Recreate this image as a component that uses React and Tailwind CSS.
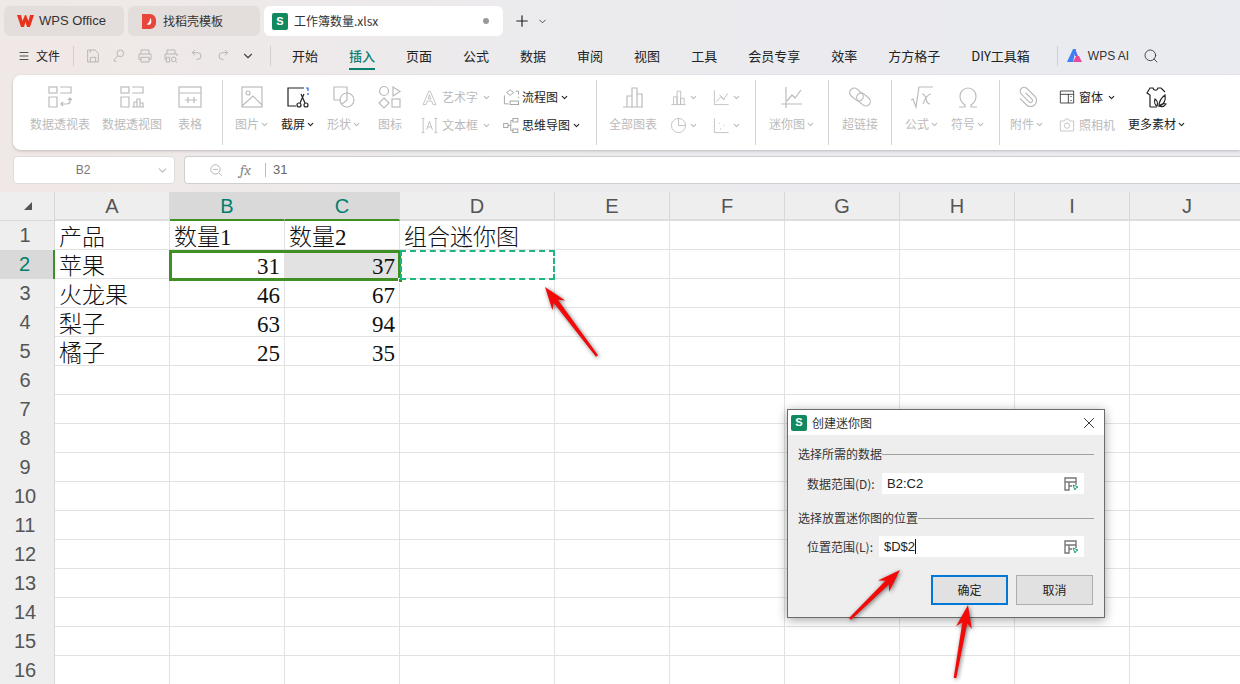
import React from 'react';
import { ChevronDown, Plus, Search, X, Menu } from 'lucide-react';

const cjk = '"Noto Sans CJK SC", "Noto Sans", sans-serif';
const cols = ['A', 'B', 'C', 'D', 'E', 'F', 'G', 'H', 'I', 'J'];
const rows = Array.from({ length: 16 }, (_, i) => i + 1);
const cells = {
  A1: '产品', B1: '数量1', C1: '数量2', D1: '组合迷你图',
  A2: '苹果', B2: '31', C2: '37',
  A3: '火龙果', B3: '46', C3: '67',
  A4: '梨子', B4: '63', C4: '94',
  A5: '橘子', B5: '25', C5: '35',
};
const menus = ['开始', '插入', '页面', '公式', '数据', '审阅', '视图', '工具', '会员专享', '效率', '方方格子', 'DIY工具箱'];

function Svg({ size = 24, children, className = '' }) {
  return (
    <svg width={size} height={size} viewBox="0 0 24 24" fill="none" stroke="currentColor" strokeWidth="1.2" className={className}>
      {children}
    </svg>
  );
}

const icons = {
  pivot: <><rect x="1" y="2" width="8" height="6" /><path d="M12 2h11v6H12M1 12h8v10H1z" /><path d="M13 19h6a3 3 0 0 0 3-3v-3M20 15l2-2 2 2M15 17l-2 2 2 2" /></>,
  pivotChart: <><rect x="1" y="2" width="8" height="6" /><path d="M12 2h11v6H12M1 12h8v10H1z" /><path d="M12 22h12M14 22v-5h3v5M17 22v-8h3v8M20 22v-4h3v4" /></>,
  table: <><rect x="1" y="2" width="22" height="20" /><path d="M1 8h22M7 15h12M10 12v6M16 12v6" /></>,
  picture: <><rect x="2" y="2" width="20" height="20" /><circle cx="8" cy="8" r="2" /><path d="M2 21l11-10 9 9" /></>,
  shot: <><path d="M18 3H2v18h8" stroke="#222" /><path d="M20 3h2v3M22 8v2" stroke="#2563eb" /><path d="M11 21h1" stroke="#2563eb" /><circle cx="13" cy="20" r="2" stroke="#222" /><circle cx="20" cy="20" r="2" stroke="#222" /><path d="M14 18l4-9M19 18l-4-9" stroke="#222" /></>,
  shape: <><path d="M9 15H2V2h13v6" /><circle cx="15" cy="15" r="7" /><path d="M15 8v7l-5 4" /></>,
  iconset: <><circle cx="6" cy="6" r="4.500" /><path d="M15 2l7 4.500-7 4.500zM6 13l5 5-5 5-5-5z" /><rect x="14" y="14" width="8" height="8" /></>,
  chart: <><path d="M2 22h20M6 22V11h5v11M11 22V3h5v19M16 22V9h5v13" /></>,
  spark: <><path d="M6 2v21M1 19h21M7 16l5-6 3 3 6-8" /></>,
  link: <><rect x="1" y="5" width="15" height="9" rx="4.500" transform="rotate(40 8.500 9.500)" /><rect x="8" y="10" width="15" height="9" rx="4.500" transform="rotate(40 15.500 14.500)" /></>,
  formula: <><path d="M1 15l2-1 3 8 3-20h14" /><path d="M12 9c2 0 3 1 4 5s2 5 4 5M21 9c-3 0-6 5-8 10" /></>,
  omega: <><path d="M3 22h6v-2c-3-2-5-5-5-9a8 8 0 0 1 16 0c0 4-2 7-5 9v2h6" /></>,
  clip: <path d="M14 8v9a2 2 0 0 1-4 0V6a4 4 0 0 1 8 0v11a6 6 0 0 1-12 0V8" transform="rotate(-45 12 12)" />,
  more: <g stroke="#222"><path d="M5 22V10L2 8l3-5h3c1 3 4 3 5 0h3l4 4M5 22h7" /><path d="M14 21c0-5 2-8 6-11 1 5-1 10-6 11zM12 21c-2-1-3-4-2-7 2 1 3 4 2 7zM14 21c2 1 5 1 7-2-3-1-5 0-7 2z" /></g>,
};

function BigItem({ icon, label, w, arrow, dark }) {
  return (
    <div className={`flex flex-col items-center shrink-0 ${w} ${dark ? 'text-[#222]' : 'text-[#bbbbbb]'}`}>
      <Svg>{icons[icon]}</Svg>
      <div className="mt-[7px] flex items-center text-xs leading-4 whitespace-nowrap">
        {label}
        {arrow && <ChevronDown size={9} strokeWidth={3} className="ml-px" />}
      </div>
    </div>
  );
}

function SmallRow({ children, label, dark, arrow = true, gap = 'gap-1' }) {
  return (
    <div className={`flex items-center h-4 ${gap} text-xs whitespace-nowrap ${dark ? 'text-[#222]' : 'text-[#bbbbbb]'}`}>
      {children}
      {label}
      {arrow && <ChevronDown size={9} strokeWidth={3} />}
    </div>
  );
}

function Divider() {
  return <div className="w-px bg-[#d4d4d4] my-1 shrink-0" />;
}

function Ribbon() {
  return (
    <div className="ml-[13px] h-[75px] flex rounded-l-lg bg-white shadow-[0_1px_3px_rgba(0,0,0,0.2)] py-[1px]">
      <div className="flex w-[209px] pl-[11px] pt-[9px] shrink-0">
        <BigItem icon="pivot" label="数据透视表" w="w-[72px]" />
        <BigItem icon="pivotChart" label="数据透视图" w="w-[72px]" />
        <BigItem icon="table" label="表格" w="w-[44px]" />
      </div>
      <Divider />
      <div className="flex w-[373px] pl-[6px] pt-[9px] shrink-0">
        <BigItem icon="picture" label="图片" w="w-[46px]" arrow />
        <BigItem icon="shot" label="截屏" w="w-[46px]" arrow dark />
        <BigItem icon="shape" label="形状" w="w-[46px]" arrow />
        <BigItem icon="iconset" label="图标" w="w-[46px]" />
        <div className="ml-[8px] w-[80px] flex flex-col gap-[12px] pt-[4px]">
          <SmallRow label="艺术字"><Svg size={17}><path d="M3 22L11 3h2l8 19h-4l-2-5H9l-2 5zM10 14h4l-2-6z" /></Svg></SmallRow>
          <SmallRow label="文本框"><Svg size={17}><path d="M1 2h4M3 2v20M1 22h4M19 2h4M21 2v20M19 22h4M8 18l4-12 4 12M9 14h6" /></Svg></SmallRow>
        </div>
        <div className="ml-[2px] flex flex-col gap-[12px] pt-[4px]">
          <SmallRow label="流程图" dark gap="gap-[2px]"><Svg size={17} className="text-[#999]"><path d="M10 1l5 4-5 4-5-4zM18 3h4v5M22 11v2M2 9v12h6" /><rect x="10" y="17" width="12" height="5" /></Svg></SmallRow>
          <SmallRow label="思维导图" dark gap="gap-[2px]"><Svg size={17} className="text-[#999]"><rect x="1" y="9" width="6" height="6" /><rect x="14" y="2" width="7" height="5" /><rect x="14" y="17" width="7" height="5" /><path d="M7 12h4V5h3M11 12v7h3" /></Svg></SmallRow>
        </div>
      </div>
      <Divider />
      <div className="flex w-[158px] pl-[10px] pt-[9px] shrink-0">
        <BigItem icon="chart" label="全部图表" w="w-[52px]" />
        <div className="ml-[11px] w-[43px] flex flex-col gap-[12px] pt-[4px]">
          <SmallRow arrow gap="gap-[2px]"><Svg size={17}><path d="M2 22h20M5 22V11h5v11M10 22V3h5v19M15 22v-9h5v9" /></Svg></SmallRow>
          <SmallRow arrow gap="gap-[2px]"><Svg size={17}><circle cx="12" cy="12" r="10" /><path d="M12 2v10h10" /></Svg></SmallRow>
        </div>
        <div className="flex flex-col gap-[12px] pt-[4px]">
          <SmallRow arrow gap="gap-[2px]"><Svg size={17}><path d="M2 2v20h20M5 18l6-7 4 4 6-9M9 8l7 7" /></Svg></SmallRow>
          <SmallRow arrow gap="gap-[2px]"><Svg size={17}><path d="M2 2v20h20" /><path d="M9 9h1M15 12h1M10 17h1" strokeWidth="2" /></Svg></SmallRow>
        </div>
      </div>
      <Divider />
      <div className="flex w-[72px] pt-[9px] shrink-0">
        <BigItem icon="spark" label="迷你图" w="w-[72px]" arrow />
      </div>
      <Divider />
      <div className="flex w-[62px] pt-[9px] shrink-0">
        <BigItem icon="link" label="超链接" w="w-[62px]" />
      </div>
      <Divider />
      <div className="flex w-[107px] pl-[7px] pt-[9px] shrink-0">
        <BigItem icon="formula" label="公式" w="w-[46px]" arrow />
        <BigItem icon="omega" label="符号" w="w-[46px]" arrow />
      </div>
      <Divider />
      <div className="flex pl-[4px] pt-[9px]">
        <BigItem icon="clip" label="附件" w="w-[46px]" arrow />
        <div className="ml-[9px] w-[64px] flex flex-col gap-[12px] pt-[4px]">
          <SmallRow label="窗体" dark gap="gap-[4px]"><Svg size={16}><path d="M2 3h20v18H2zM2 8h20M14 8v13" /><path d="M17 12l1-1 1 1M17 17l1 1 1-1" /></Svg></SmallRow>
          <SmallRow label="照相机" arrow={false} gap="gap-[4px]"><Svg size={16}><path d="M2 6h6l2-3h4l2 3h6v15H2z" /><circle cx="12" cy="13" r="4" /></Svg></SmallRow>
        </div>
        <BigItem icon="more" label="更多素材" w="w-[68px]" arrow dark />
      </div>
    </div>
  );
}

function Chrome() {
  return (
    <div className="h-[192px] bg-gradient-to-r from-[#f0e8e6] via-[#ebebee] to-[#eaebf0]" style={{ fontFamily: cjk }}>
      {/* tabs */}
      <div className="h-[38px] flex items-start pt-[6px] pl-[4px] gap-[4px] text-[12px] text-[#333]">
        <div className="w-[120px] h-[30px] rounded-md bg-[#e3dddb] flex items-center pl-[13px] gap-[5px]">
          <svg width="17" height="14" viewBox="0 0 17 14"><path d="M0 1h4l1.500 6L8 1h1l2.500 6L13 1h4l-4 12h-3L8.500 8 7 13H4z" fill="#e8341c" /></svg>
          <span className="text-[13px]" style={{ fontFamily: '"Liberation Sans", sans-serif' }}>WPS Office</span>
        </div>
        <div className="w-[132px] h-[30px] rounded-md bg-[#e3dddb] flex items-center pl-[13px] gap-[6px]">
          <svg width="16" height="17" viewBox="0 0 16 17"><path d="M1 1h8a6 6 0 0 1 6 6v3a6 6 0 0 1-6 6H1z" fill="#e8463c" /><path d="M5 11c2 0 4-2 4-6 2 2 2 6-1 7" fill="white" /></svg>
          <span>找稻壳模板</span>
        </div>
        <div className="w-[239px] h-[30px] rounded-md bg-white flex items-center pl-[8px] gap-[6px]">
          <div className="w-[16px] h-[17px] rounded-[2px] bg-[#10895f] text-white text-[11px] font-bold flex items-center justify-center" style={{ fontFamily: '"Liberation Sans", sans-serif' }}>S</div>
          <span>工作簿数量.xlsx</span>
          <div className="ml-auto mr-[14px] w-[6px] h-[6px] rounded-full bg-[#999]" />
        </div>
        <Plus size={18} strokeWidth={1.6} className="ml-[6px] mt-[6px] text-[#222]" />
        <ChevronDown size={11} strokeWidth={2} className="ml-[2px] mt-[10px] text-[#444]" />
      </div>
      {/* menu */}
      <div className="h-[37px] flex items-center pb-[2px] pl-[18px] text-[13px] text-[#222]">
        <Menu size={12} strokeWidth={1.5} />
        <span className="ml-[6px] text-xs">文件</span>
        <div className="ml-[13px] w-px h-[20px] bg-[#cfcfcf]" />
        <div className="ml-[11px] w-[185px] flex items-center gap-[10px] text-[#aaaaaa]">
          <Svg size={16}><path d="M4 3h11l5 5v13H4zM8 21v-7h8v7M8 3v4" /></Svg>
          <Svg size={16}><circle cx="14" cy="8" r="5" /><path d="M10 12l-5 5v3h3" /></Svg>
          <Svg size={16}><path d="M6 9V3h12v6M6 17H3V9h18v8h-3M6 14h12v7H6z" /></Svg>
          <Svg size={16}><path d="M6 9V3h12v6M5 17H3V9h18v3M5 14h5v7H5z" /><circle cx="16" cy="17" r="3.500" /><path d="M19 20l2 2" /></Svg>
          <Svg size={16}><path d="M9 3L5 7l4 4M5 7h8a5 5 0 0 1 0 10h-2" /></Svg>
          <Svg size={16}><path d="M15 3l4 4-4 4M19 7h-8a5 5 0 0 0 0 10h2" /></Svg>
          <ChevronDown size={14} className="text-[#444]" />
        </div>
        <div className="w-px h-[20px] bg-[#cfcfcf]" />
        <div className="ml-[21px] flex items-center gap-[31px]">
          {menus.map(m => (
            <div key={m} className={`relative whitespace-nowrap ${m === '插入' ? 'text-[#0b7f6e] font-medium' : ''}`}>
              {m}
              {m === '插入' && <div className="absolute left-0 right-0 -bottom-[5px] h-[2px] bg-[#0b7f6e]" />}
            </div>
          ))}
        </div>
        <div className="ml-[27px] w-px h-[20px] bg-[#cfcfcf]" />
        <svg className="ml-[9px]" width="16" height="13" viewBox="0 0 16 13">
          <path d="M0 13L6 0h3L6 13z" fill="#3b82f6" /><path d="M6 13l3-6 3 0 3 6z" fill="#ec4899" /><path d="M8 0l3 7H8z" fill="#6d5ef0" />
        </svg>
        <span className="ml-[5px] text-xs text-[#333]" style={{ fontFamily: '"Liberation Sans", sans-serif' }}>WPS AI</span>
        <Search size={16} strokeWidth={1.3} className="ml-[14px] text-[#333]" />
      </div>
      <Ribbon />
      {/* formula bar */}
      <div className="mt-[6px] h-[28px] flex pl-[13px] gap-[9px] text-[#777]">
        <div className="w-[162px] rounded-[4px] bg-white border border-[#dddddd] flex items-center text-xs relative">
          <span className="w-full text-center pr-[22px]" style={{ fontFamily: '"Liberation Sans", sans-serif' }}>B2</span>
          <ChevronDown size={13} className="absolute right-[5px] text-[#bbbbbb]" />
        </div>
        <div className="flex-1 rounded-l-[4px] bg-white border border-r-0 border-[#cfcfcf] flex items-center pl-[24px] text-[13px]" style={{ fontFamily: '"Liberation Sans", sans-serif' }}>
          <Svg size={14} className="text-[#999]"><circle cx="11" cy="11" r="8" /><path d="M17 17l5 5M7 11h8" /></Svg>
          <span className="ml-[17px] italic text-[15px] font-serif text-[#888]">fx</span>
          <div className="ml-[14px] w-px h-[14px] bg-[#bbbbbb]" />
          <span className="ml-[7px] text-[#666]">31</span>
        </div>
      </div>
    </div>
  );
}

function Sheet() {
  return (
    <div className="relative grid bg-white grid-cols-[55px_115px_115px_115px_155px_115px_115px_115px_115px_115px_115px] grid-rows-[29px_repeat(16,29px)]">
      <div className="bg-[#eeeeee] border-r border-b border-[#d8d8d8] flex items-center justify-center pl-[2px]">
        <svg width="10" height="10" viewBox="0 0 10 10"><path d="M9 1v8H1z" fill="#555" /></svg>
      </div>
      {cols.map(c => {
        const on = c === 'B' || c === 'C';
        return (
          <div
            key={c}
            className={`flex items-center justify-center text-[20px] border-r border-b-2 ${on ? 'bg-[#d9d9d9] text-[#00806c] border-r-[#d9d9d9] border-b-[#3f8f24]' : 'bg-[#eeeeee] text-[#555] border-r-[#d8d8d8] border-b-[#dddddd]'}`}
            style={{ fontFamily: '"Liberation Sans", sans-serif' }}
          >
            {c}
          </div>
        );
      })}
      {rows.map(r => (
        <React.Fragment key={r}>
          <div
            className={`flex items-center justify-center pr-[4px] pb-[2px] text-[20px] ${r === 2 ? 'bg-[#d9d9d9] text-[#00806c] border-r-2 border-r-[#3f8f24]' : 'bg-[#eeeeee] text-[#555] border-r border-r-[#d8d8d8]'}`}
            style={{ fontFamily: '"Liberation Sans", sans-serif' }}
          >
            {r}
          </div>
          {cols.map(c => {
            const id = c + r;
            const v = cells[id];
            const num = v && /^\d+$/.test(v);
            return (
              <div
                key={id}
                className={`border-r border-b border-[#e2e2e2] flex items-end leading-[22px] text-[23px] font-light text-[#111] px-[4px] whitespace-nowrap overflow-visible ${num ? 'justify-end' : ''} ${id === 'C2' ? 'bg-[#e2e2e2]' : ''}`}
                style={{ fontFamily: '"Liberation Serif", "Noto Sans CJK SC", serif' }}
              >
                {v}
              </div>
            );
          })}
        </React.Fragment>
      ))}
      {/* selection */}
      <div className="absolute left-[169px] top-[58px] w-[232px] h-[31px] border-[3px] border-[#3f8f24] pointer-events-none" />
      <div className="absolute left-[398px] top-[86px] w-[5px] h-[5px] bg-[#3f8f24] border border-white" />
      <div className="absolute left-[400px] top-[58px] w-[155px] h-[30px] border-2 border-dashed border-[#1fb57f] pointer-events-none" />
    </div>
  );
}

function PickIcon() {
  return (
    <svg width="15" height="14" viewBox="0 0 15 14" fill="none">
      <path d="M1 1h11v4H5v8H1zM1 5h4M5 5h7v3M5 9h3" stroke="#777" strokeWidth="1.400" />
      <path d="M9 8l5 2-2 1-1 2z" stroke="#22a06b" strokeWidth="1" fill="white" />
    </svg>
  );
}

function FieldRow({ label, value, inputW, caret }) {
  return (
    <div className="flex items-center h-[21px] pl-[9px] pr-[10px] justify-between text-xs text-[#333]">
      <span className="whitespace-nowrap">{label}</span>
      <div className={`${inputW} h-[21px] bg-white flex items-center pl-[5px] pr-[5px]`}>
        <span className="text-[13px] text-[#222]" style={{ fontFamily: '"Liberation Sans", sans-serif' }}>{value}</span>
        {caret && <span className="w-px h-[15px] bg-[#111]" />}
        <span className="ml-auto"><PickIcon /></span>
      </div>
    </div>
  );
}

function SectionLabel({ children }) {
  return (
    <div className="flex items-center text-xs text-[#333]">
      <span className="whitespace-nowrap">{children}</span>
      <div className="flex-1 h-px bg-[#a0a0a0]" />
    </div>
  );
}

function Dialog() {
  return (
    <div className="absolute left-[787px] top-[409px] w-[318px] h-[209px] border border-[#6b6b6b] bg-[#eeeeee] shadow-[0_2px_10px_rgba(0,0,0,0.35)]" style={{ fontFamily: cjk }}>
      <div className="h-[25px] bg-white flex items-center pl-[3px] pr-[6px]">
        <div className="w-[16px] h-[16px] rounded-[2px] bg-[#10895f] text-white text-[11px] font-bold flex items-center justify-center" style={{ fontFamily: '"Liberation Sans", sans-serif' }}>S</div>
        <span className="ml-[5px] text-xs text-[#333]">创建迷你图</span>
        <X size={18} strokeWidth={1.2} className="ml-auto text-[#222]" />
      </div>
      <div className="pl-[10px] pr-[10px] pt-[11px]">
        <SectionLabel>选择所需的数据</SectionLabel>
        <div className="mt-[11px]"><FieldRow label="数据范围(D):" value="B2:C2" inputW="w-[202px]" /></div>
        <div className="mt-[16px]"><SectionLabel>选择放置迷你图的位置</SectionLabel></div>
        <div className="mt-[10px]"><FieldRow label="位置范围(L):" value="$D$2" inputW="w-[205px]" caret /></div>
        <div className="mt-[18px] flex justify-end gap-[8px] pr-px text-xs text-[#222]">
          <div className="w-[77px] h-[30px] bg-[#e1e1e1] border-2 border-[#0078d7] flex items-center justify-center">确定</div>
          <div className="w-[77px] h-[30px] bg-[#e1e1e1] border border-[#adadad] flex items-center justify-center">取消</div>
        </div>
      </div>
    </div>
  );
}

// red arrow from tail to tip, shaft a bit wider at the neck
function arrowPoints([tx, ty], [hx, hy]) {
  const dx = hx - tx;
  const dy = hy - ty;
  const len = Math.hypot(dx, dy);
  const ux = dx / len;
  const uy = dy / len;
  const nx = -uy;
  const ny = ux;
  const at = (d, o) => `${hx - ux * d + nx * o},${hy - uy * d + ny * o}`;
  return [
    at(len, 1.300),
    at(18, 2.500),
    at(23, 8),
    `${hx},${hy}`,
    at(23, -8),
    at(18, -2.500),
    at(len, -1.300),
  ].join(' ');
}

function Arrows() {
  const list = [
    [[597, 356], [545, 287]],
    [[850, 619], [900, 570]],
    [[955, 678], [968, 605]],
  ];
  return (
    <svg className="absolute inset-0 pointer-events-none drop-shadow-[1px_1px_2px_rgba(0,0,0,0.55)]" width="1240" height="684">
      {list.map((a, i) => (
        <polygon key={i} points={arrowPoints(a[0], a[1])} fill="#f20a0a" />
      ))}
    </svg>
  );
}

export default function App() {
  return (
    <div className="relative w-[1240px] h-[684px] overflow-hidden bg-white">
      <Chrome />
      <Sheet />
      <Dialog />
      <Arrows />
    </div>
  );
}
